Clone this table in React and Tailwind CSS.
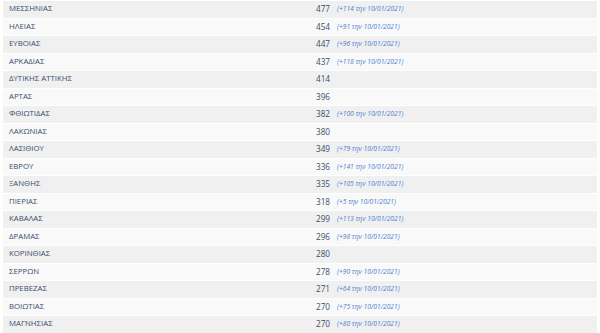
import React from 'react';

const rows = [
  ['ΜΕΣΣΗΝΙΑΣ', 477, '+114'],
  ['ΗΛΕΙΑΣ', 454, '+91'],
  ['ΕΥΒΟΙΑΣ', 447, '+96'],
  ['ΑΡΚΑΔΙΑΣ', 437, '+118'],
  ['ΔΥΤΙΚΗΣ ΑΤΤΙΚΗΣ', 414, null],
  ['ΑΡΤΑΣ', 396, null],
  ['ΦΘΙΩΤΙΔΑΣ', 382, '+100'],
  ['ΛΑΚΩΝΙΑΣ', 380, null],
  ['ΛΑΣΙΘΙΟΥ', 349, '+79'],
  ['ΕΒΡΟΥ', 336, '+141'],
  ['ΞΑΝΘΗΣ', 335, '+105'],
  ['ΠΙΕΡΙΑΣ', 318, '+5'],
  ['ΚΑΒΑΛΑΣ', 299, '+113'],
  ['ΔΡΑΜΑΣ', 296, '+98'],
  ['ΚΟΡΙΝΘΙΑΣ', 280, null],
  ['ΣΕΡΡΩΝ', 278, '+90'],
  ['ΠΡΕΒΕΖΑΣ', 271, '+64'],
  ['ΒΟΙΩΤΙΑΣ', 270, '+75'],
  ['ΜΑΓΝΗΣΙΑΣ', 270, '+80'],
];

export default function App() {
  return (
    <div className="w-[600px] h-[333px] overflow-hidden bg-white pt-px px-[3px]" style={{ fontFamily: '"Open Sans", sans-serif' }}>
      <div className="flex flex-col gap-px">
        {rows.map(([name, num, diff], i) => (
          <div
            key={name}
            className={`flex items-center h-[16.5px] text-[7.8px] text-[#3a4d6e] ${i % 2 === 0 ? 'bg-[#f0f0f0]' : 'bg-[#f9f9f9]'}`}
          >
            <div className="w-[280px] pl-[6px]">{name}</div>
            <div className="w-[47px] text-right text-[8.2px]">{num}</div>
            {diff && (
              <div className="pl-[7px] text-[6.7px] italic text-[#4a7fd0]">({diff} την 10/01/2021)</div>
            )}
          </div>
        ))}
      </div>
    </div>
  );
}
